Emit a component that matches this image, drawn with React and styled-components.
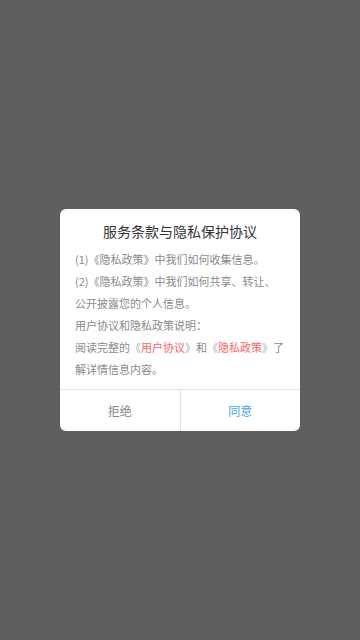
import styled, { createGlobalStyle } from 'styled-components';

const GlobalStyle = createGlobalStyle`
  html, body {
    margin: 0;
    padding: 0;
    height: 100%;
  }
  body {
    font-family: "Noto Sans CJK SC", "Noto Sans", sans-serif;
  }
  #root {
    height: 100%;
  }
`;

const Overlay = styled.div`
  height: 100vh;
  background: #5f5f5f;
  display: flex;
  align-items: center;
  justify-content: center;
`;

const Dialog = styled.div`
  width: 240px;
  background: #fff;
  border-radius: 6px;
  overflow: hidden;
`;

const Title = styled.h2`
  margin: 0;
  padding-top: 12px;
  font-size: 14px;
  line-height: 20px;
  font-weight: 400;
  color: #333;
  text-align: center;
`;

const Body = styled.div`
  padding: 7px 15px 9px;
  font-size: 11px;
  line-height: 22px;
  color: #8a8a8a;
`;

const Line = styled.div`
  white-space: nowrap;
`;

const Bracket = styled.span`
  color: #b0b0b0;
`;

const Link = styled.span`
  color: #ff6464;
`;

const Footer = styled.div`
  display: flex;
  border-top: 1px solid #e2e2e2;
`;

const Action = styled.button`
  flex: 1;
  height: 41px;
  border: none;
  background: none;
  font-family: inherit;
  font-size: 12px;
  color: ${({ $primary }) => ($primary ? '#44a6f0' : '#888')};
  & + & {
    border-left: 1px solid #e2e2e2;
  }
`;

function Policy({ children }) {
  return (
    <>
      <Bracket>《</Bracket>
      <Link>{children}</Link>
      <Bracket>》</Bracket>
    </>
  );
}

export default function App() {
  return (
    <>
      <GlobalStyle />
      <Overlay>
        <Dialog>
          <Title>服务条款与隐私保护协议</Title>
          <Body>
            <Line>(1)《隐私政策》中我们如何收集信息。</Line>
            <Line>(2)《隐私政策》中我们如何共享、转让、</Line>
            <Line>公开披露您的个人信息。</Line>
            <Line>用户协议和隐私政策说明：</Line>
            <Line>
              阅读完整的<Policy>用户协议</Policy>和<Policy>隐私政策</Policy>了
            </Line>
            <Line>解详情信息内容。</Line>
          </Body>
          <Footer>
            <Action type="button">拒绝</Action>
            <Action type="button" $primary>同意</Action>
          </Footer>
        </Dialog>
      </Overlay>
    </>
  );
}
